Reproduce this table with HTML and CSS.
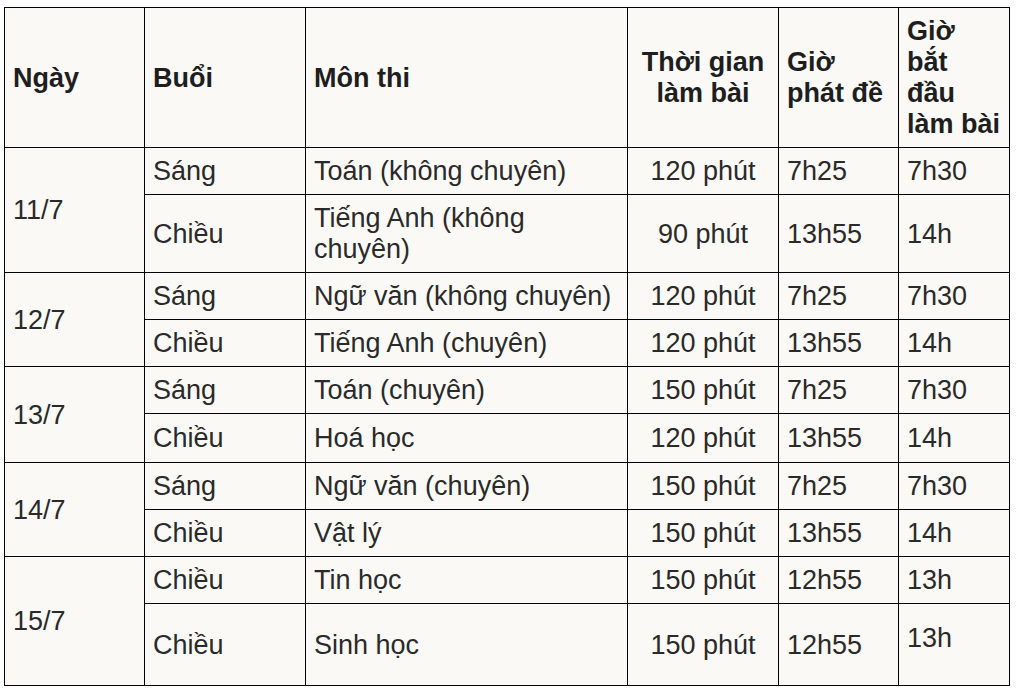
FILE: index.html
```html
<!DOCTYPE html>
<html lang="vi">
<head>
<meta charset="utf-8">
<title>Lịch thi</title>
<link rel="stylesheet" href="styles.css">
</head>
<body>
<table class="schedule">
  <colgroup>
    <col class="c-date">
    <col class="c-session">
    <col class="c-subject">
    <col class="c-duration">
    <col class="c-hand">
    <col class="c-start">
  </colgroup>
  <thead>
    <tr class="head-row">
      <th>Ngày</th>
      <th>Buổi</th>
      <th>Môn thi</th>
      <th class="center">Thời gian<br>làm bài</th>
      <th>Giờ<br>phát đề</th>
      <th>Giờ<br>bắt<br>đầu<br>làm bài</th>
    </tr>
  </thead>
  <tbody>
    <tr>
      <td rowspan="2">11/7</td>
      <td>Sáng</td>
      <td>Toán (không chuyên)</td>
      <td class="center">120 phút</td>
      <td>7h25</td>
      <td>7h30</td>
    </tr>
    <tr>
      <td>Chiều</td>
      <td>Tiếng Anh (không<br>chuyên)</td>
      <td class="center">90 phút</td>
      <td>13h55</td>
      <td>14h</td>
    </tr>
    <tr>
      <td rowspan="2">12/7</td>
      <td>Sáng</td>
      <td>Ngữ văn (không chuyên)</td>
      <td class="center">120 phút</td>
      <td>7h25</td>
      <td>7h30</td>
    </tr>
    <tr>
      <td>Chiều</td>
      <td>Tiếng Anh (chuyên)</td>
      <td class="center">120 phút</td>
      <td>13h55</td>
      <td>14h</td>
    </tr>
    <tr>
      <td rowspan="2">13/7</td>
      <td>Sáng</td>
      <td>Toán (chuyên)</td>
      <td class="center">150 phút</td>
      <td>7h25</td>
      <td>7h30</td>
    </tr>
    <tr class="wide-row">
      <td>Chiều</td>
      <td>Hoá học</td>
      <td class="center">120 phút</td>
      <td>13h55</td>
      <td>14h</td>
    </tr>
    <tr>
      <td rowspan="2">14/7</td>
      <td>Sáng</td>
      <td>Ngữ văn (chuyên)</td>
      <td class="center">150 phút</td>
      <td>7h25</td>
      <td>7h30</td>
    </tr>
    <tr>
      <td>Chiều</td>
      <td>Vật lý</td>
      <td class="center">150 phút</td>
      <td>13h55</td>
      <td>14h</td>
    </tr>
    <tr>
      <td rowspan="2">15/7</td>
      <td>Chiều</td>
      <td>Tin học</td>
      <td class="center">150 phút</td>
      <td>12h55</td>
      <td>13h</td>
    </tr>
    <tr class="tall-row">
      <td>Chiều</td>
      <td>Sinh học</td>
      <td class="center">150 phút</td>
      <td>12h55</td>
      <td class="raised">13h</td>
    </tr>
  </tbody>
</table>
</body>
</html>
```
FILE: styles.css
```css
html, body {
  margin: 0;
  padding: 0;
  background: #ffffff;
}

body {
  padding: 7px 0 0 4px;
  font-family: "Liberation Sans", Arial, sans-serif;
  color: #2a2a2a;
}

.schedule {
  border-collapse: collapse;
  table-layout: fixed;
  width: 1006px;
  background: #faf9f6;
  font-size: 27px;
  line-height: 31px;
}

.c-date { width: 140px; }
.c-session { width: 161px; }
.c-subject { width: 322px; }
.c-duration { width: 151px; }
.c-hand { width: 120px; }
.c-start { width: 111px; }

.schedule th,
.schedule td {
  border: 1px solid #000;
  padding: 8px 8px 7px 8px;
  text-align: left;
  vertical-align: middle;
}

.schedule th {
  font-weight: bold;
  color: #1e1e1e;
}

.schedule .center {
  text-align: center;
}

.wide-row {
  height: 49px;
}

.tall-row {
  height: 82px;
}

.schedule .raised {
  padding-bottom: 20px;
}
```
